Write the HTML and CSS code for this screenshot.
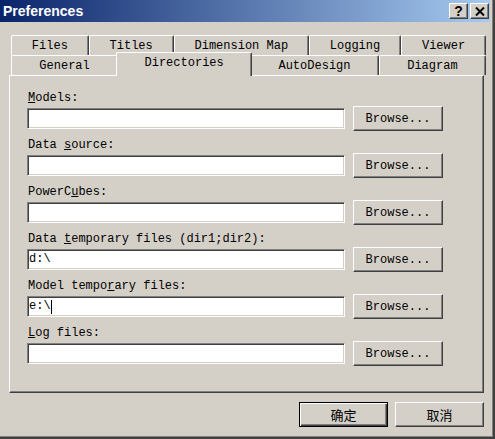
FILE: index.html
```html
<!DOCTYPE html>
<html lang="en">
<head>
    <meta charset="UTF-8">
    <title>Preferences</title>
    <link rel="stylesheet" href="styles.css">
</head>
<body>
<div class="window">
    <div class="caption">
        <span class="caption-title">Preferences</span>
        <div class="caption-buttons">
            <span class="caption-btn help">?</span>
            <span class="caption-btn">
                <svg width="10" height="9" viewBox="0 0 10 9">
                    <path d="M1 0.5 L9 8.5 M9 0.5 L1 8.5" stroke="#000" stroke-width="2" fill="none"/>
                </svg>
            </span>
        </div>
    </div>

    <div class="content">
        <div class="tabs">
            <div class="tab-row">
                <div class="tab">Files</div>
                <div class="tab">Titles</div>
                <div class="tab">Dimension Map</div>
                <div class="tab">Logging</div>
                <div class="tab">Viewer</div>
            </div>
            <div class="tab-row front">
                <div class="tab">General</div>
                <div class="tab active">Directories</div>
                <div class="tab">AutoDesign</div>
                <div class="tab">Diagram</div>
            </div>
        </div>

        <div class="panel">
            <div class="field">
                <label><u>M</u>odels:</label>
                <div class="field-line">
                    <div class="edit"></div>
                    <button type="button" class="btn">Browse...</button>
                </div>
            </div>
            <div class="field">
                <label>Data <u>s</u>ource:</label>
                <div class="field-line">
                    <div class="edit"></div>
                    <button type="button" class="btn">Browse...</button>
                </div>
            </div>
            <div class="field">
                <label>PowerC<u>u</u>bes:</label>
                <div class="field-line">
                    <div class="edit"></div>
                    <button type="button" class="btn">Browse...</button>
                </div>
            </div>
            <div class="field">
                <label>Data <u>t</u>emporary files (dir1;dir2):</label>
                <div class="field-line">
                    <div class="edit">d:\</div>
                    <button type="button" class="btn">Browse...</button>
                </div>
            </div>
            <div class="field">
                <label>Model tempo<u>r</u>ary files:</label>
                <div class="field-line">
                    <div class="edit">e:\<span class="caret"></span></div>
                    <button type="button" class="btn">Browse...</button>
                </div>
            </div>
            <div class="field">
                <label><u>L</u>og files:</label>
                <div class="field-line">
                    <div class="edit"></div>
                    <button type="button" class="btn">Browse...</button>
                </div>
            </div>
        </div>

        <div class="actions">
            <button type="button" class="btn cjk default">确定</button>
            <button type="button" class="btn cjk">取消</button>
        </div>
    </div>
</div>
</body>
</html>
```

FILE: styles.css
```css
body {
    margin: 0;
    background: #d4d0c8;
    color: #000;
    font-family: "Liberation Mono", monospace;
    font-size: 12px;
}

.window {
    width: 495px;
    height: 439px;
    box-sizing: border-box;
    padding: 0 5px 4px 0;
    box-shadow: inset -2px -2px #404040, inset -3px -3px #808080;
}

/* title bar */
.caption {
    height: 22px;
    display: flex;
    align-items: center;
    justify-content: space-between;
    padding: 0 1px 0 3px;
    background: linear-gradient(to right, #0a246a, #a6caf0);
}

.caption-title {
    font-family: "Liberation Sans", Arial, sans-serif;
    font-weight: bold;
    font-size: 14px;
    color: #fff;
}

.caption-buttons {
    display: flex;
    gap: 2px;
}

.caption-btn {
    width: 17px;
    height: 14px;
    display: flex;
    align-items: center;
    justify-content: center;
    background: #d4d0c8;
    border: 1px solid;
    border-color: #fff #404040 #404040 #fff;
    box-shadow: inset -1px -1px #808080;
    font-family: "Liberation Sans", Arial, sans-serif;
    font-weight: bold;
    font-size: 14px;
}

.content {
    padding: 13px 0 0 9px;
}

/* tab strip, two rows */
.tabs {
    margin: 0 4px 0 2px;
}

.tab-row {
    display: flex;
    height: 20px;
    align-items: flex-end;
}

.tab {
    flex: 1 1 auto;
    height: 20px;
    box-sizing: border-box;
    display: flex;
    align-items: center;
    justify-content: center;
    border-top: 1px solid #fff;
    border-left: 1px solid #fff;
    border-right: 1px solid #404040;
    border-radius: 2px 2px 0 0;
    box-shadow: inset -1px 0 #808080;
    white-space: nowrap;
}

.tab.active {
    position: relative;
    z-index: 2;
    height: 24px;
    margin: 0 -2px -1px;
    padding-bottom: 4px;
    background: #d4d0c8;
}

.panel {
    position: relative;
    z-index: 1;
    width: 475px;
    height: 318px;
    box-sizing: border-box;
    padding: 15px 0 0 17px;
    border: 1px solid;
    border-color: #fff #404040 #404040 #fff;
    box-shadow: inset -1px -1px #808080;
    display: flex;
    flex-direction: column;
    gap: 7px;
}

.field label {
    display: block;
    height: 14px;
    line-height: 14px;
    margin: 0 0 1px 1px;
}

.field-line {
    display: flex;
    align-items: center;
    height: 25px;
}

.edit {
    width: 318px;
    height: 21px;
    box-sizing: border-box;
    padding-left: 1px;
    line-height: 17px;
    background: #fff;
    border: 1px solid;
    border-color: #808080 #fff #fff #808080;
    box-shadow: inset 1px 1px #404040, inset -1px -1px #d4d0c8;
    display: flex;
    align-items: center;
}

.caret {
    display: inline-block;
    width: 1px;
    height: 14px;
    background: #000;
}

.btn {
    width: 90px;
    height: 25px;
    margin: 0 0 0 8px;
    padding: 0;
    background: #d4d0c8;
    color: #000;
    font-family: "Liberation Mono", monospace;
    font-size: 12px;
    border: 1px solid;
    border-color: #fff #404040 #404040 #fff;
    box-shadow: inset -1px -1px #808080;
}

.actions {
    display: flex;
    justify-content: flex-end;
    gap: 7px;
    width: 475px;
    margin-top: 9px;
}

.actions .btn {
    margin: 0;
    width: 89px;
}

.btn.cjk {
    font-family: "Noto Sans CJK SC", sans-serif;
    font-size: 13px;
}

.btn.default {
    border: 1px solid #000;
    box-shadow: inset 1px 1px #fff, inset -1px -1px #404040, inset -2px -2px #808080;
}
```
